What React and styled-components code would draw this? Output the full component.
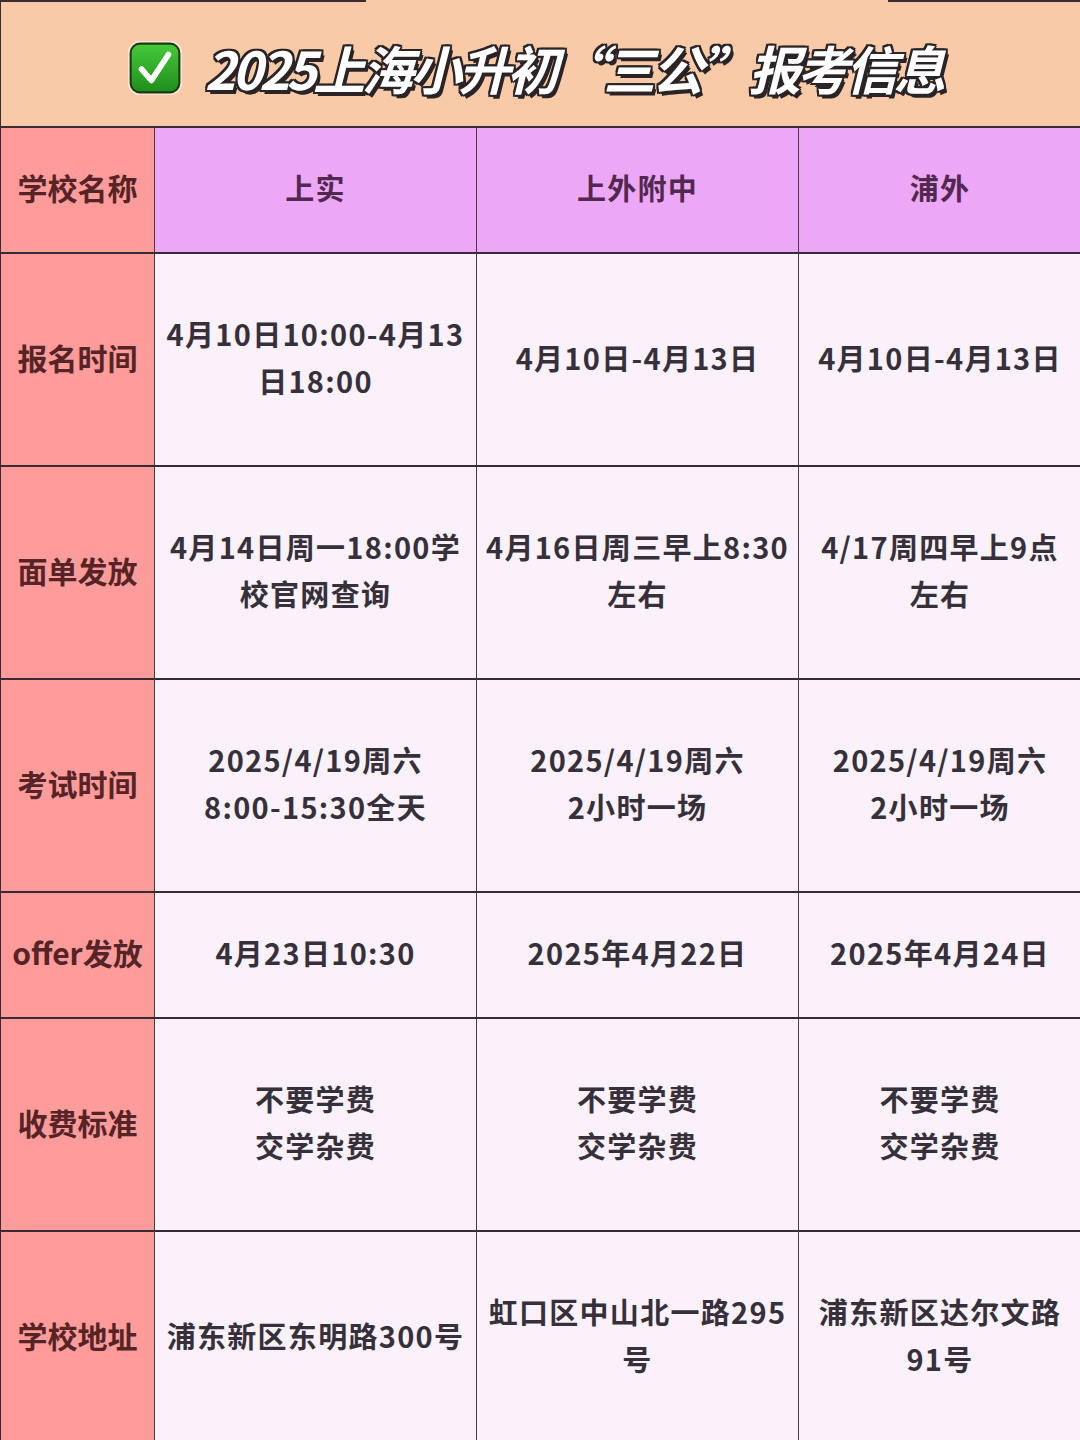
import styled, { createGlobalStyle } from "styled-components";

const GlobalStyle = createGlobalStyle`
  html, body {
    margin: 0;
    padding: 0;
    background: #fbf1fb;
  }
  body {
    font-family: "Noto Sans CJK SC", "Noto Sans", sans-serif;
  }
`;

const Page = styled.div`
  width: 1080px;
  height: 1440px;
  overflow: hidden;
  border-left: 1px solid #3b2a33;
  box-sizing: border-box;
`;

const Header = styled.header`
  height: 126px;
  background: #f9caa8;
  display: flex;
  flex-direction: column;
`;

const TopEdge = styled.div`
  display: flex;
  justify-content: space-between;
  height: 2px;
`;

const EdgeLine = styled.div`
  width: ${(p) => p.$w}px;
  background: #3b2a33;
`;

const TitleRow = styled.div`
  flex: 1;
  display: flex;
  align-items: center;
  justify-content: center;
  gap: 22px;
  padding-top: 8px;
  padding-right: 12px;
`;

const Title = styled.h1`
  margin: 0;
  font-size: 52px;
  font-weight: 700;
  font-style: italic;
  letter-spacing: -3.6px;
  color: #ffffff;
  line-height: 1;
  text-shadow:
    -2px -2px 0 #2a2426,
    2px -2px 0 #2a2426,
    -2px 2px 0 #2a2426,
    2px 2px 0 #2a2426,
    0 -2px 0 #2a2426,
    0 2px 0 #2a2426,
    -2px 0 0 #2a2426,
    2px 0 0 #2a2426,
    3px 4px 0 #2a2426;
`;

const Grid = styled.div`
  display: grid;
  grid-template-columns: 153px 322px 322px 283px;
  grid-template-rows: 126px 213px 213px 213px 126px 213px 213px;
`;

const Cell = styled.div`
  box-sizing: border-box;
  display: flex;
  align-items: center;
  justify-content: center;
  text-align: center;
  border-top: 2px solid #3b2a33;
  border-left: ${(p) => (p.$first ? "none" : "1.5px solid #4a3a46")};
  font-size: 29px;
  line-height: 47px;
  letter-spacing: 1.3px;
  padding: 0 4px 5px;
  white-space: pre-line;
`;

const LabelCell = styled(Cell)`
  background: #fd9c9a;
  color: #562426;
  font-weight: 700;
  font-size: 30px;
  padding: 0 2px 5px;
  letter-spacing: 0;
`;

const HeadCell = styled(Cell)`
  background: #eca8f6;
  color: #52284f;
  font-weight: 700;
`;

const DataCell = styled(Cell)`
  background: #fbf1fb;
  color: #36303a;
  font-weight: 600;
`;

function CheckEmoji() {
  return (
    <svg width="56" height="56" viewBox="0 0 54 54">
      <defs>
        <linearGradient id="g" x1="0" y1="0" x2="0" y2="1">
          <stop offset="0" stopColor="#46c83a" />
          <stop offset="1" stopColor="#1f8f1c" />
        </linearGradient>
      </defs>
      <rect x="1" y="1" width="52" height="52" rx="11" fill="#fbe6d4" />
      <rect x="2.5" y="2.5" width="49" height="49" rx="10" fill="#1a3a16" />
      <rect x="4.5" y="4.5" width="45" height="45" rx="8" fill="url(#g)" />
      <path
        d="M14 28 L23.5 39 L40 14"
        fill="none"
        stroke="#ffffff"
        strokeWidth="5.5"
        strokeLinecap="round"
        strokeLinejoin="round"
      />
    </svg>
  );
}

const schools = ["上实", "上外附中", "浦外"];

const rows = [
  ["报名时间", ["4月10日10:00-4月13\n日18:00", "4月10日-4月13日", "4月10日-4月13日"]],
  ["面单发放", ["4月14日周一18:00学\n校官网查询", "4月16日周三早上8:30\n左右", "4/17周四早上9点\n左右"]],
  ["考试时间", ["2025/4/19周六\n8:00-15:30全天", "2025/4/19周六\n2小时一场", "2025/4/19周六\n2小时一场"]],
  ["offer发放", ["4月23日10:30", "2025年4月22日", "2025年4月24日"]],
  ["收费标准", ["不要学费\n交学杂费", "不要学费\n交学杂费", "不要学费\n交学杂费"]],
  ["学校地址", ["浦东新区东明路300号", "虹口区中山北一路295\n号", "浦东新区达尔文路\n91号"]],
];

export default function App() {
  return (
    <>
      <GlobalStyle />
      <Page>
        <Header>
          <TopEdge>
            <EdgeLine $w={365} />
            <EdgeLine $w={192} />
          </TopEdge>
          <TitleRow>
            <CheckEmoji />
            <Title>2025上海小升初“三公”报考信息</Title>
          </TitleRow>
        </Header>
        <Grid>
          <LabelCell $first>学校名称</LabelCell>
          {schools.map((s) => (
            <HeadCell key={s}>{s}</HeadCell>
          ))}
          {rows.map(([label, values]) => [
            <LabelCell $first key={label}>
              {label}
            </LabelCell>,
            ...values.map((v, i) => <DataCell key={label + i}>{v}</DataCell>),
          ])}
        </Grid>
      </Page>
    </>
  );
}
